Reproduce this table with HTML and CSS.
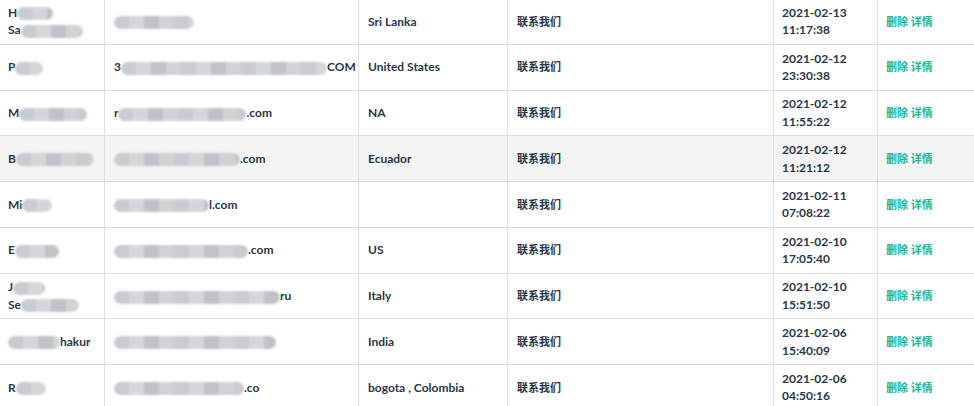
FILE: index.html
```html
<!DOCTYPE html>
<html>
<head>
<meta charset="utf-8">
<link rel="stylesheet" href="styles.css">
</head>
<body>
<div class="table">
  <div class="row">
    <div class="cell c1"><div>H<span class="mask" style="width:36px"></span></div><div>Sa<span class="mask" style="width:62px"></span></div></div>
    <div class="cell c2"><span class="mask" style="width:80px"></span></div>
    <div class="cell c3">Sri Lanka</div>
    <div class="cell c4 cjk">联系我们</div>
    <div class="cell c5"><div>2021-02-13</div><div>11:17:38</div></div>
    <div class="cell c6 cjk act">删除 详情</div>
  </div>
  <div class="row">
    <div class="cell c1">P<span class="mask" style="width:28px"></span></div>
    <div class="cell c2">3<span class="mask" style="width:206px"></span>COM</div>
    <div class="cell c3">United States</div>
    <div class="cell c4 cjk">联系我们</div>
    <div class="cell c5"><div>2021-02-12</div><div>23:30:38</div></div>
    <div class="cell c6 cjk act">删除 详情</div>
  </div>
  <div class="row">
    <div class="cell c1">M<span class="mask" style="width:68px"></span></div>
    <div class="cell c2">r<span class="mask" style="width:128px"></span>.com</div>
    <div class="cell c3">NA</div>
    <div class="cell c4 cjk">联系我们</div>
    <div class="cell c5"><div>2021-02-12</div><div>11:55:22</div></div>
    <div class="cell c6 cjk act">删除 详情</div>
  </div>
  <div class="row alt">
    <div class="cell c1">B<span class="mask" style="width:78px"></span></div>
    <div class="cell c2"><span class="mask" style="width:126px"></span>.com</div>
    <div class="cell c3">Ecuador</div>
    <div class="cell c4 cjk">联系我们</div>
    <div class="cell c5"><div>2021-02-12</div><div>11:21:12</div></div>
    <div class="cell c6 cjk act">删除 详情</div>
  </div>
  <div class="row">
    <div class="cell c1">Mi<span class="mask" style="width:30px"></span></div>
    <div class="cell c2"><span class="mask" style="width:95px"></span>l.com</div>
    <div class="cell c3"></div>
    <div class="cell c4 cjk">联系我们</div>
    <div class="cell c5"><div>2021-02-11</div><div>07:08:22</div></div>
    <div class="cell c6 cjk act">删除 详情</div>
  </div>
  <div class="row">
    <div class="cell c1">E<span class="mask" style="width:44px"></span></div>
    <div class="cell c2"><span class="mask" style="width:134px"></span>.com</div>
    <div class="cell c3">US</div>
    <div class="cell c4 cjk">联系我们</div>
    <div class="cell c5"><div>2021-02-10</div><div>17:05:40</div></div>
    <div class="cell c6 cjk act">删除 详情</div>
  </div>
  <div class="row">
    <div class="cell c1"><div>J<span class="mask" style="width:32px"></span></div><div>Se<span class="mask" style="width:58px"></span></div></div>
    <div class="cell c2"><span class="mask" style="width:166px"></span>ru</div>
    <div class="cell c3">Italy</div>
    <div class="cell c4 cjk">联系我们</div>
    <div class="cell c5"><div>2021-02-10</div><div>15:51:50</div></div>
    <div class="cell c6 cjk act">删除 详情</div>
  </div>
  <div class="row">
    <div class="cell c1"><span class="mask" style="width:52px"></span>hakur</div>
    <div class="cell c2"><span class="mask" style="width:162px"></span></div>
    <div class="cell c3">India</div>
    <div class="cell c4 cjk">联系我们</div>
    <div class="cell c5"><div>2021-02-06</div><div>15:40:09</div></div>
    <div class="cell c6 cjk act">删除 详情</div>
  </div>
  <div class="row">
    <div class="cell c1">R<span class="mask" style="width:30px"></span></div>
    <div class="cell c2"><span class="mask" style="width:130px"></span>.co</div>
    <div class="cell c3">bogota , Colombia</div>
    <div class="cell c4 cjk">联系我们</div>
    <div class="cell c5"><div>2021-02-06</div><div>04:50:16</div></div>
    <div class="cell c6 cjk act">删除 详情</div>
  </div>
</div>
</body>
</html>
```

FILE: styles.css
```css
html, body {
  margin: 0;
  padding: 0;
  background: #ffffff;
}
body {
  font-family: Lato, "Noto Sans CJK SC", sans-serif;
  font-size: 12px;
  font-weight: 700;
  color: #2a3646;
  overflow: hidden;
}
.table {
  margin-top: -1px;
}
.row {
  display: grid;
  grid-template-columns: 105px 254px 149px 266px 104px 1fr;
  border-bottom: 1px solid #dedede;
  height: 45.75px;
  box-sizing: border-box;
}
.row.alt {
  background: #f4f4f4;
}
.cell {
  display: flex;
  flex-direction: column;
  justify-content: center;
  padding: 0 9px;
  line-height: 17.5px;
  white-space: nowrap;
  border-right: 1px solid #dedede;
  box-sizing: border-box;
  overflow: hidden;
}
.cell.c1 {
  padding-left: 8px;
}
.cell.c1, .cell.c2 {
  display: block;
  align-content: center;
}
.cell.c1 > div {
  display: block;
}
.cell.c6 {
  border-right: none;
  padding-left: 8px;
}
.cell.c5 {
  padding-left: 8px;
}
.cjk {
  font-size: 11px;
  font-weight: 700;
}
.act {
  color: #1bb999;
}
.mask {
  display: inline-block;
  height: 13px;
  vertical-align: middle;
  border-radius: 7px;
  background: repeating-linear-gradient(90deg, #c8cbcf 0 15px, #d4d7da 15px 30px, #bfc3c8 30px 45px, #d0d3d6 45px 60px);
  filter: blur(0.8px);
}
```
